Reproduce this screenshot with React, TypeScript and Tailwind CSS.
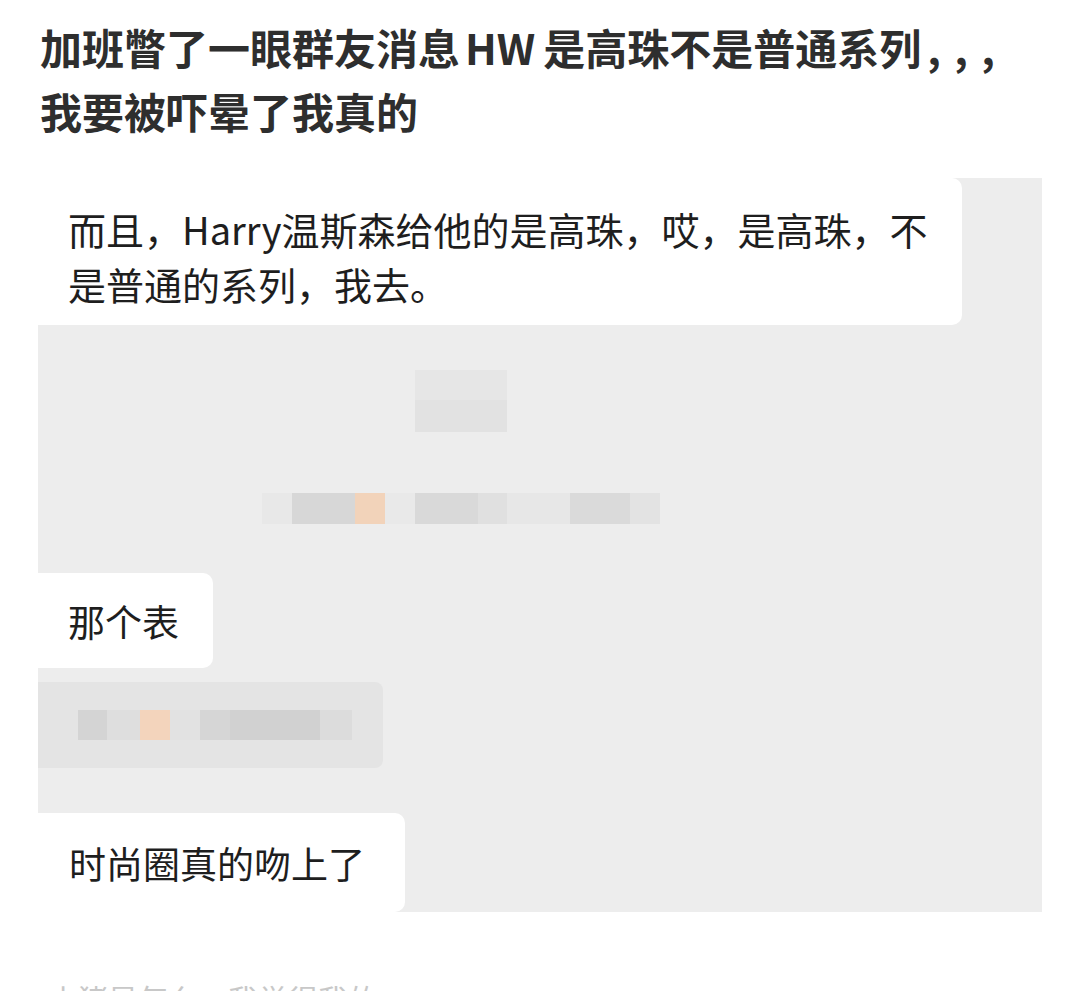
import React from "react";

const cjk = { fontFamily: '"Noto Sans CJK SC", "Noto Sans", sans-serif' };

export default function App() {
  return (
    <div className="h-[991px] w-[1080px] overflow-hidden bg-white" style={cjk}>
      <div className="pl-[40px] pt-[15px] text-[42px] leading-[64px] font-bold text-[#2e2e2e]">
        加班瞥了一眼群友消息<span className="ml-[5px] mr-[8px]">HW</span>是高珠不是普通系列
        <span className="ml-[6px] inline-block w-[27px]">,</span>
        <span className="inline-block w-[27px]">,</span>
        <span className="inline-block w-[27px]">,</span>
        <br />
        我要被吓晕了我真的
      </div>

      <div className="ml-[38px] mt-[35px] flex h-[734px] w-[1004px] flex-col bg-[#ededed]">
        <div className="h-[147px] w-[924px] rounded-r-[10px] bg-white pl-[30px] pt-[23px] text-[38px] leading-[55px] text-[#1e1e1e]">
          而且，Harry温斯森给他的是高珠，哎，是高珠，不
          <br />
          是普通的系列，我去。
        </div>

        <div className="ml-[377px] mt-[45px] flex h-[62px] w-[92px] flex-col">
          <div className="h-[30px] bg-[#e6e6e6]" />
          <div className="h-[32px] bg-[#e2e2e2]" />
        </div>

        <div className="ml-[224px] mt-[61px] flex h-[31px]">
          <div className="w-[30px] bg-[#e8e8e8]" />
          <div className="w-[63px] bg-[#d7d7d7]" />
          <div className="w-[30px] bg-[#f2d3ba]" />
          <div className="w-[30px] bg-[#e9e9e9]" />
          <div className="w-[63px] bg-[#d9d9d9]" />
          <div className="w-[29px] bg-[#e0e0e0]" />
          <div className="w-[63px] bg-[#e7e7e7]" />
          <div className="w-[60px] bg-[#dadada]" />
          <div className="w-[30px] bg-[#e3e3e3]" />
        </div>

        <div className="mt-[49px] flex h-[95px] w-[175px] items-center rounded-r-[10px] bg-white pl-[30px] text-[37px] leading-[52px] text-[#1e1e1e]">
          那个表
        </div>

        <div className="mt-[14px] flex h-[86px] w-[345px] items-center rounded-r-[8px] bg-[#e4e4e4] pl-[40px]">
          <div className="flex h-[30px]">
            <div className="w-[29px] bg-[#d4d4d4]" />
            <div className="w-[33px] bg-[#dedede]" />
            <div className="w-[30px] bg-[#f3d4bc]" />
            <div className="w-[30px] bg-[#e2e2e2]" />
            <div className="w-[30px] bg-[#d6d6d6]" />
            <div className="w-[90px] bg-[#d1d1d1]" />
            <div className="w-[32px] bg-[#dcdcdc]" />
          </div>
        </div>

        <div className="mt-[45px] flex h-[99px] w-[367px] items-center rounded-r-[10px] bg-white pl-[31px] text-[37px] leading-[52px] text-[#1e1e1e]">
          时尚圈真的吻上了
        </div>
      </div>

      <div className="pl-[48px] pt-[66px] text-[30px] leading-[40px] text-[#c8c8c8]">
        小猪是怎么，我觉得我的
      </div>
    </div>
  );
}
